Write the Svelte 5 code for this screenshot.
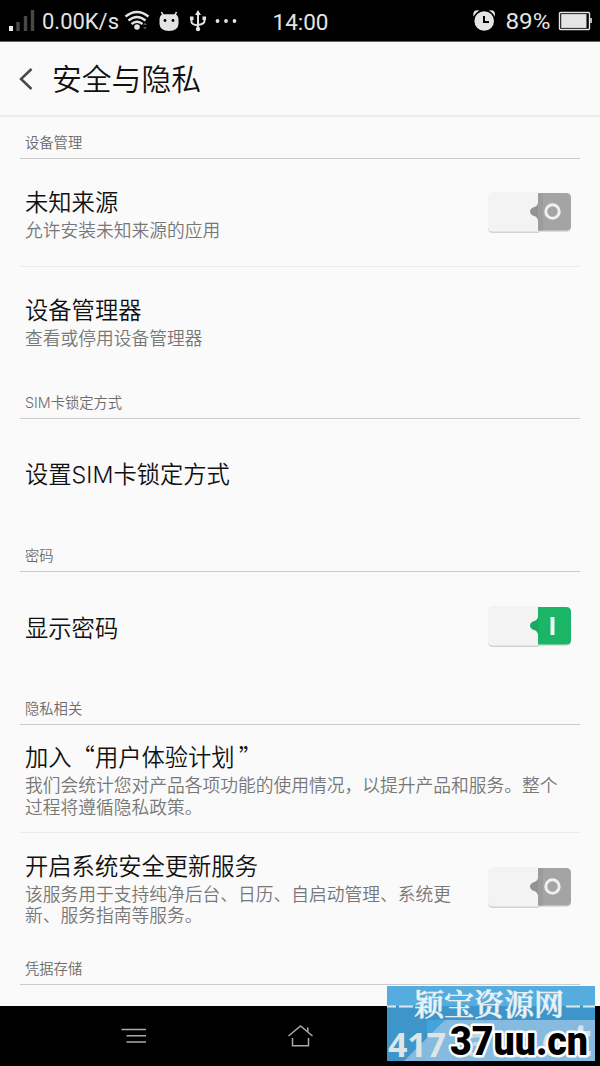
<script>
  const sections = [
    {
      name: '设备管理',
      items: [
        { title: '未知来源', lines: ['允许安装未知来源的应用'], toggle: 'off' },
        { title: '设备管理器', lines: ['查看或停用设备管理器'] }
      ]
    },
    { name: 'SIM卡锁定方式', items: [{ title: '设置SIM卡锁定方式', lines: [] }] },
    { name: '密码', items: [{ title: '显示密码', lines: [], toggle: 'on' }] },
    {
      name: '隐私相关',
      items: [
        {
          title: '加入“用户体验计划”',
          lines: ['我们会统计您对产品各项功能的使用情况，以提升产品和服务。整个', '过程将遵循隐私政策。']
        },
        {
          title: '开启系统安全更新服务',
          lines: ['该服务用于支持纯净后台、日历、自启动管理、系统更', '新、服务指南等服务。'],
          toggle: 'off'
        }
      ]
    },
    { name: '凭据存储', items: [] }
  ];
  // Latin runs and closing quotes are set apart from the Chinese text
  const runs = (text) => text.split(/(SIM|”)/).filter(Boolean);
</script>

{#snippet label(text)}{#each runs(text) as run}<span class:latin={run === 'SIM'} class:close={run === '”'}>{run}</span>{/each}{/snippet}

<div class="screen">
  <div class="status">
    <svg width="600" height="41" viewBox="0 0 600 41">
      <rect x="9" y="26" width="4" height="5" fill="#eee" />
      <path d="M18 22V31M25.500 16V31M32.500 10V31" stroke="#484848" stroke-width="3.400" />
      <g fill="#e4e4e4">
        <text x="42" y="29.200" font-size="22.800" textLength="77" lengthAdjust="spacingAndGlyphs">0.00K/s</text>
        <text x="272.500" y="30" font-size="22.500" textLength="56" lengthAdjust="spacingAndGlyphs">14:00</text>
        <text x="505.500" y="29" font-size="22" textLength="45" lengthAdjust="spacingAndGlyphs">89%</text>
      </g>
      <g fill="none" stroke="#e4e4e4" stroke-width="2.300">
        <path d="M125.500 16.500Q137 7.500 148.500 16.500M128.500 20.500Q137 13.500 145.500 20.500M131.500 24Q137 19.500 142.500 24" />
      </g>
      <circle cx="137" cy="27" r="2.800" fill="#e4e4e4" />
      <path d="M143 25l2-2.500 2 2.500zM143 27l2 2.500 2-2.500z" fill="#555" />
      <path d="M161.500 12l2 4M176.500 12l-2 4" stroke="#e4e4e4" stroke-width="1.600" />
      <path d="M159.500 19Q160 15 163 14.200H175Q178 15 178.500 19V24Q178 31 169 31Q160 31 159.500 24Z" fill="#e4e4e4" />
      <circle cx="165" cy="20.500" r="1.400" /><circle cx="173" cy="20.500" r="1.400" />
      <g fill="none" stroke="#e4e4e4" stroke-width="2">
        <path d="M198 14V29M191.500 18V22Q191.500 24.500 198 25.500M204.500 18V21Q204.500 24 198 25" />
      </g>
      <path d="M195 15L198 10 201 15zM190 16.500h3.500v3.500h-3.500zM202.500 16.500h3.500v3.500h-3.500z" fill="#e4e4e4" />
      <circle cx="198" cy="29" r="2.200" fill="#e4e4e4" />
      <g fill="#e4e4e4"><circle cx="217.500" cy="21" r="1.900" /><circle cx="226" cy="21" r="1.900" /><circle cx="234.500" cy="21" r="1.900" /></g>
      <g fill="#e4e4e4"><circle cx="477.300" cy="14.200" r="4" /><circle cx="491" cy="14.200" r="4" /></g>
      <circle cx="484.200" cy="21" r="10.600" fill="#e4e4e4" stroke="#000" stroke-width="1.600" />
      <path d="M484 16V22H489" stroke="#000" stroke-width="2" fill="none" />
      <rect x="559.500" y="12.500" width="30" height="17" rx="1" fill="none" stroke="#e4e4e4" stroke-width="1.400" />
      <rect x="561.200" y="14.100" width="25.300" height="13.800" fill="#e4e4e4" />
      <rect x="590" y="18" width="2" height="5" fill="#bbb" />
    </svg>
  </div>

  <header>
    <svg width="14" height="24" viewBox="0 0 14 24"><path d="M12.500 2L2 12 12.500 22" fill="none" stroke="#484848" stroke-width="2.500" /></svg>
    <h1>安全与隐私</h1>
  </header>

  <main>
    {#each sections as section}
      <h2>{@render label(section.name)}</h2>
      {#each section.items as item}
        <div class="item">
          <div class="copy">
            <div class="title">{@render label(item.title)}</div>
            {#each item.lines as line}<div class="line">{line}</div>{/each}
          </div>
          {#if item.toggle}
            <svg class="toggle" width="86" height="44" viewBox="0 0 86 44">
              <path d="M1 30V37Q1 42 6 42H52V30Z" fill="#d2d2d2" />
              <path d="M51 2.500H79Q84 2.500 84 7.500V36.500Q84 41 79 41H51Z" fill="#ddd" />
              <path d="M50 2H79Q84 2 84 7V35Q84 39.500 79 39.500H50Z" fill={item.toggle === 'on' ? '#1bb567' : '#a4a4a4'} />
              <path d="M6 1H51V40.500H6Q1 40.500 1 36V6Q1 1 6 1Z" fill="#f3f3f3" />
              <path d="M51.500 9Q51 14.500 48.500 15.500Q43 17 43 20.500Q43 24 48.500 25.500Q51 27 51.500 32Z" fill={item.toggle === 'on' ? '#1ba860' : '#929292'} />
              {#if item.toggle === 'on'}
                <rect x="63.500" y="12" width="4" height="18" fill="#edf8f1" />
              {:else}
                <rect x="51" y="2" width="5" height="37.500" fill="#9c9c9c" />
                <circle cx="65.500" cy="20.500" r="6.700" fill="none" stroke="#efefef" stroke-width="3" />
              {/if}
            </svg>
          {/if}
        </div>
      {/each}
    {/each}
  </main>

  <nav>
    <svg width="600" height="60" viewBox="0 0 600 60" fill="none" stroke="#aaa" stroke-width="1.500">
      <path d="M121.500 23.500H146M126.500 29.700H146M126.500 36H146" />
      <path d="M288.500 30L300.500 20 312.500 30M292.500 32V39.700H308.500V32M307.800 21.500V26" />
    </svg>
  </nav>

  <svg class="mark" width="208" height="75" viewBox="0 0 208 75">
    <rect width="208" height="75" fill="#55acdf" />
    <rect y="20" width="208" height="55" fill="#3e95c9" />
    <path d="M40 34H57V54H40Z" fill="#43a3dc" />
    <path d="M58 34H208V75H17Z" fill="#86bade" />
    <path d="M0 20.500H9M12 20.500H26M179 20.500H193M196 20.500H208" stroke="#dce8ed" stroke-width="2" />
    <text class="serif" x="27" y="28.500" font-size="30">颖宝资源网</text>
    <text class="digits" x="1" y="71" font-size="34" textLength="58" fill="#dde5e7">417</text>
    <text class="digits" x="81" y="71" font-size="34" fill="#c5d7e2">3</text>
    <text class="digits" x="104" y="71" font-size="46" textLength="101" fill="#d8e4ec">.net</text>
    <text class="brand" x="63" y="69" font-size="41" textLength="138" lengthAdjust="spacingAndGlyphs">37uu.cn</text>
  </svg>
</div>

<style>
  :global(body) {
    margin: 0;
    background: #fafafa;
  }
  .screen {
    position: relative;
    width: 600px;
    height: 1066px;
    overflow: hidden;
    display: flex;
    flex-direction: column;
    background: #fafafa;
    font-family: 'Noto Sans CJK SC', sans-serif;
    font-weight: 350;
    color: #111;
  }
  svg {
    display: block;
    flex: none;
  }
  .status {
    height: 41px;
    background: #000;
    border-bottom: 1px solid #666;
    flex: none;
    font-family: Roboto, sans-serif;
    font-weight: 400;
  }
  header {
    height: 73px;
    flex: none;
    display: flex;
    align-items: center;
    gap: 19px;
    padding-left: 19px;
    border-bottom: 2px solid #ebebeb;
  }
  h1 {
    margin: 0;
    padding-bottom: 3px;
    font-size: 29.800px;
    line-height: 40px;
    font-weight: inherit;
  }
  main {
    flex: 1;
    min-height: 0;
    padding: 0 20px;
  }
  h2 {
    box-sizing: border-box;
    height: 44px;
    margin: 0;
    padding: 16px 5px 0;
    border-bottom: 1px solid #ccc;
    font-size: 14.300px;
    line-height: 22px;
    font-weight: inherit;
    color: #6c6c6c;
  }
  main h2:first-child {
    height: 42px;
    padding-top: 14px;
  }
  .latin {
    font-family: Inter, sans-serif;
    font-weight: 300;
  }
  .close {
    padding-left: 4px;
  }
  .item {
    box-sizing: border-box;
    height: 108px;
    display: flex;
    align-items: center;
    justify-content: space-between;
    padding: 1px 7px 0 5px;
  }
  h2 + .item:has(+ h2) {
    height: 109px;
  }
  .item:has(+ .item) {
    border-bottom: 1px solid #ebebeb;
  }
  .copy {
    white-space: nowrap;
  }
  .title {
    font-size: 23.300px;
    line-height: 31px;
  }
  .title + .line {
    margin-top: 2px;
  }
  .line {
    font-size: 17.750px;
    line-height: 21.500px;
    color: #777;
  }
  nav {
    height: 60px;
    flex: none;
    background: #000;
  }
  .mark {
    position: absolute;
    left: 387px;
    top: 986px;
  }
  .serif {
    font-family: 'Noto Serif CJK SC', 'Noto Sans CJK SC', serif;
    font-weight: 600;
    fill: #e9f1f4;
    stroke: #e9f1f4;
    stroke-width: 0.5px;
  }
  .digits {
    font-family: 'Noto Sans', sans-serif;
    font-weight: 700;
  }
  .brand {
    font-family: Roboto, sans-serif;
    font-weight: 900;
    fill: #000;
    stroke: #fff;
    stroke-width: 5px;
    stroke-linejoin: round;
    paint-order: stroke;
  }
</style>
